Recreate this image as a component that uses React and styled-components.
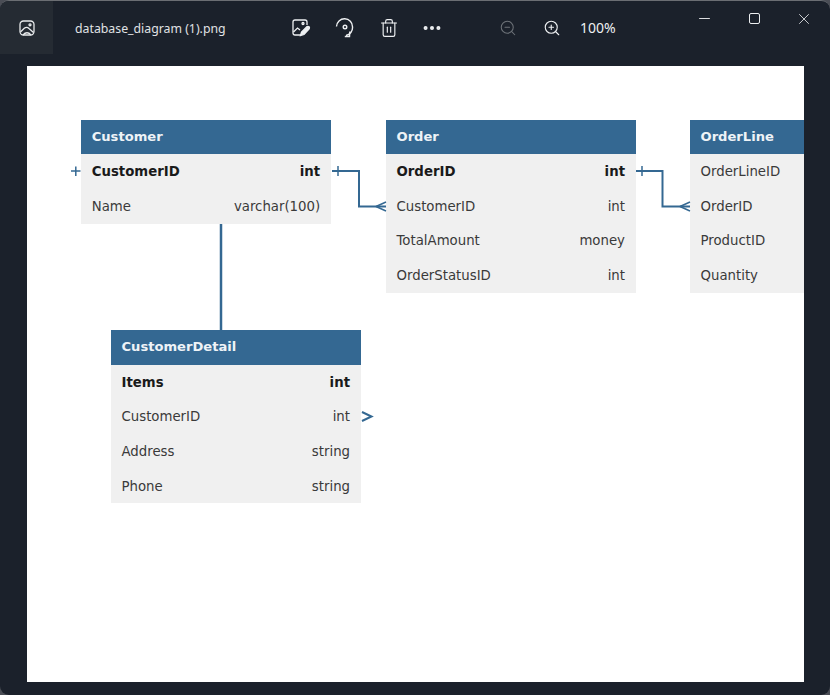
import React from "react";
import styled, { createGlobalStyle } from "styled-components";
import { Trash2, MoreHorizontal, ZoomIn, ZoomOut, Minus, X } from "lucide-react";

const Global = createGlobalStyle`
  html, body { margin: 0; padding: 0; background: #4a4d55; }
  #root { width: 830px; height: 695px; }
`;

const Window = styled.div`
  width: 830px; height: 695px; box-sizing: border-box;
  background: #1b212b; border-radius: 9px; overflow: hidden;
  border-top: 1px solid #6b6e73;
  display: flex; flex-direction: column;
  font-family: "Noto Sans", "Open Sans", sans-serif;
`;
const TitleBar = styled.header`
  height: 65px; flex: none; display: flex; align-items: flex-start; color: #eef0f2;
`;
const AppTab = styled.div`
  width: 53px; height: 53px; background: #252b33; display: flex; align-items: center; justify-content: center;
`;
const FileName = styled.span`
  width: 204px; margin-left: 22px; line-height: 55px; font-size: 12.3px; color: #e0e2e5; white-space: nowrap;
`;
const Tools = styled.div`
  display: flex; align-items: center; height: 53px;
`;
const ToolSlot = styled.div`
  width: ${p => p.$w || 44}px; display: flex; justify-content: center; align-items: center;
  color: ${p => p.$dim ? "#6d7278" : "#eef0f2"};
`;
const ToolGap = styled.div`
  width: 33px;
`;
const Percent = styled.span`
  font-size: 14px; line-height: 55px; color: #eef0f2; margin-left: 7px; width: 52px;
`;
const Controls = styled.div`
  margin-left: auto; display: flex; height: 35px; align-items: center; padding-right: 1px;
`;
const ControlBtn = styled.div`
  width: 50px; display: flex; justify-content: center; color: #eceef0;
`;
const MaxBox = styled.div`
  width: 9px; height: 9px; border: 1.4px solid #eceef0; border-radius: 2px;
`;
const Body = styled.main`
  flex: 1; display: flex; padding: 0 26px 13px 27px; min-height: 0;
`;
const Canvas = styled.div`
  flex: 1; background: #fff; position: relative; overflow: hidden;
`;
const Table = styled.section`
  position: absolute; left: ${p => p.$x}px; top: ${p => p.$y}px; width: 250px;
  font-family: "DejaVu Sans", Verdana, sans-serif; font-size: 13.3px; color: #2c2c2c;
  background: #f0f0f0;
`;
const TableHead = styled.div`
  background: #346892; color: #eef3f7; font-weight: 700; font-size: 13.1px; height: 34.7px; line-height: 33px; padding: 0 11px 0 10.5px;
`;
const Row = styled.div`
  height: 34.7px; display: flex; justify-content: space-between; align-items: center; padding: 0 11px 0 10.5px;
  font-weight: ${p => p.$key ? 700 : 400}; color: ${p => p.$key ? "#1a1a1a" : "#3a3a3a"};
`;
const Wires = styled.svg`
  position: absolute; left: 0; top: 0; width: 777px; height: 616px; overflow: visible; pointer-events: none; z-index: 1;
`;

const ImageIcon = () => (
  <svg width="18" height="18" viewBox="0 0 18 18" fill="none" stroke="#e8eaec" strokeWidth="1.3">
    <rect x="2" y="2" width="14" height="14" rx="3.5" />
    <path d="M2.5 13 L6.5 9 Q9 7.5 11 9.5 L15.5 13.5" />
    <circle cx="12" cy="5.8" r="1" />
    <path d="M5 16 Q9 11.5 13 16" />
  </svg>
);
const EditIcon = () => (
  <svg width="20" height="20" viewBox="0 0 20 20" fill="none" stroke="#eef0f2" strokeWidth="1.3">
    <path d="M9 17 H4 Q2 17 2 15 V4 Q2 2 4 2 H14 Q16 2 16 4 V7" />
    <path d="M2.5 14 L6.5 10 L9 12" />
    <circle cx="12" cy="5.5" r="1" />
    <path d="M9.5 17.5 L10.5 14 L16 8.5 Q17.5 8 18.3 9 Q18.8 10 18 11 L13 16.5 Z" fill="#eef0f2" />
  </svg>
);
const RotateIcon = () => (
  <svg width="20" height="20" viewBox="0 0 20 20" fill="none" stroke="#eef0f2" strokeWidth="1.4">
    <path d="M1.5 8.5 A8 8 0 0 1 17.5 9 A8 8 0 0 1 11 17.5" />
    <circle cx="10" cy="9" r="1.8" />
    <path d="M14.8 13.5 L14.5 18.5 L9.8 18.5" />
  </svg>
);

const tables = [
  { name: "Customer", x: 54.2, y: 53.5, rows: [["CustomerID", "int", 1], ["Name", "varchar(100)"]] },
  { name: "Order", x: 359, y: 53.5, rows: [["OrderID", "int", 1], ["CustomerID", "int"], ["TotalAmount", "money"], ["OrderStatusID", "int"]] },
  { name: "OrderLine", x: 663, y: 53.5, rows: [["OrderLineID"], ["OrderID"], ["ProductID"], ["Quantity"]] },
  { name: "CustomerDetail", x: 84, y: 264, rows: [["Items", "int", 1], ["CustomerID", "int"], ["Address", "string"], ["Phone", "string"]] },
];

export default function App() {
  return (
    <Window>
      <Global />
      <TitleBar>
        <AppTab><ImageIcon /></AppTab>
        <FileName>database_diagram (1).png</FileName>
        <Tools>
          <ToolSlot $w={44}><EditIcon /></ToolSlot>
          <ToolSlot $w={44}><RotateIcon /></ToolSlot>
          <ToolSlot $w={43}><Trash2 size={20} strokeWidth={1.4} /></ToolSlot>
          <ToolSlot $w={43}><MoreHorizontal size={22} strokeWidth={2.4} /></ToolSlot>
          <ToolGap />
          <ToolSlot $w={44} $dim><ZoomOut size={18} strokeWidth={1.4} /></ToolSlot>
          <ToolSlot $w={43}><ZoomIn size={18} strokeWidth={1.5} /></ToolSlot>
          <Percent>100%</Percent>
        </Tools>
        <Controls>
          <ControlBtn><Minus size={17} strokeWidth={1.3} /></ControlBtn>
          <ControlBtn><MaxBox /></ControlBtn>
          <ControlBtn><X size={18} strokeWidth={1.1} /></ControlBtn>
        </Controls>
      </TitleBar>
      <Body>
        <Canvas>
          {tables.map(t => (
            <Table key={t.name} $x={t.x} $y={t.y}>
              <TableHead>{t.name}</TableHead>
              {t.rows.map(([n, ty, k]) => (
                <Row key={n} $key={!!k}><span>{n}</span>{ty && <span>{ty}</span>}</Row>
              ))}
            </Table>
          ))}
          <Wires viewBox="0 0 777 616" fill="none" stroke="#346892" strokeWidth="2">
            <path d="M305 105 H332 V140.5 H359" />
            <path d="M311 100 V110" strokeWidth="1.5" />
            <path d="M349 140.5 L359 136 M349 140.5 L359 145" strokeWidth="1.5" />
            <path d="M609 105 H635.5 V140.5 H663" />
            <path d="M615 100 V110" strokeWidth="1.5" />
            <path d="M653 140.5 L663 136 M653 140.5 L663 145" strokeWidth="1.5" />
            <path d="M194 158 V264" strokeWidth="2.5" />
            <path d="M44 105 H53.5 M48.8 100.5 V110" strokeWidth="1.5" />
            <path d="M335 346 L344.5 350.5 L335 355" strokeWidth="2" />
          </Wires>
        </Canvas>
      </Body>
    </Window>
  );
}
